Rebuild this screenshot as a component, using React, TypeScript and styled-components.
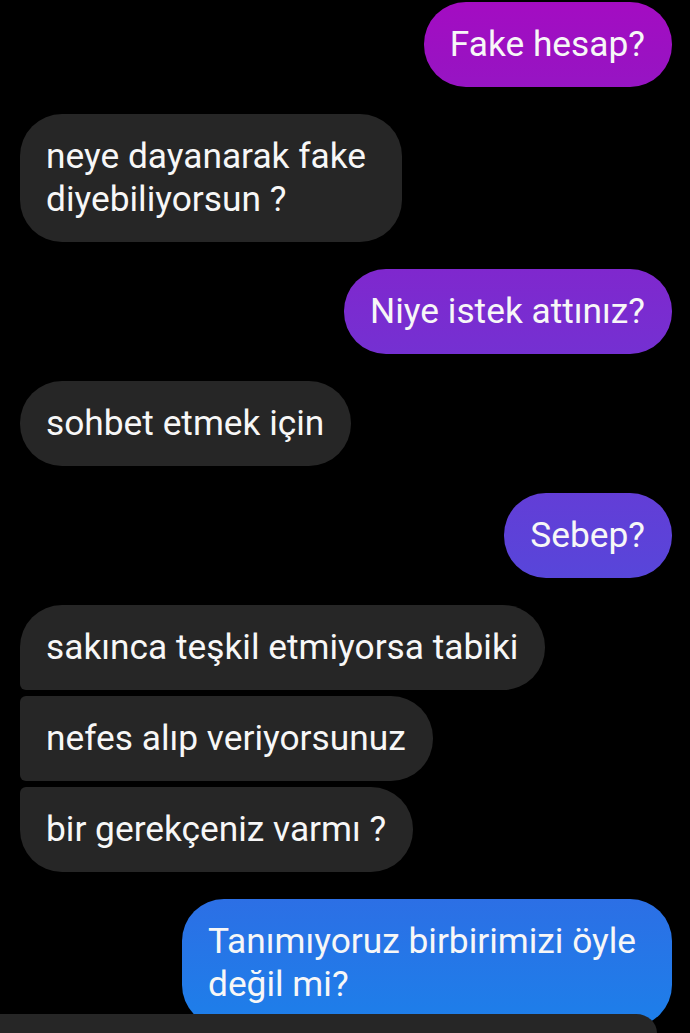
import React from "react";
import styled, { createGlobalStyle, css } from "styled-components";

const Global = createGlobalStyle`
  html, body {
    margin: 0;
    padding: 0;
    background: #000;
  }
  body {
    font-family: Roboto, "Noto Sans", "Liberation Sans", sans-serif;
    overflow: hidden;
  }
`;

const Thread = styled.div`
  display: flex;
  flex-direction: column;
  padding: 2px 18px 0 20px;
  height: 1033px;
  box-sizing: border-box;
  overflow: hidden;
`;

const Block = styled.div<{ $side: "in" | "out" }>`
  display: flex;
  flex-direction: column;
  align-items: ${(p) => (p.$side === "out" ? "flex-end" : "flex-start")};
  gap: 6px;
  margin-bottom: 27px;
`;

type Pos = "single" | "first" | "middle" | "last";

const radius = (pos: Pos) => {
  switch (pos) {
    case "first":
      return "42px 42px 42px 6px";
    case "middle":
      return "6px 42px 42px 6px";
    case "last":
      return "6px 42px 42px 42px";
    default:
      return "42px";
  }
};

const Bubble = styled.div<{ $side: "in" | "out"; $pos?: Pos; $wrapped?: boolean }>`
  box-sizing: border-box;
  width: ${(p) => (p.$wrapped ? (p.$side === "out" ? "490px" : "382px") : "fit-content")};
  padding: 21px 27px 21px 26px;
  font-size: 35.3px;
  line-height: 43px;
  color: #f7f7f7;
  letter-spacing: 0;
  border-radius: ${(p) => radius(p.$pos ?? "single")};
  ${(p) =>
    p.$side === "out"
      ? css`
          background: linear-gradient(
            180deg,
            #a40cc2 0px,
            #9a12c2 60px,
            #7a2cd0 310px,
            #5a44d9 560px,
            #3d5ee0 760px,
            #1c80ea 1033px
          );
          background-attachment: fixed;
        `
      : css`
          background: #262626;
        `}
`;

const Composer = styled.div`
  position: fixed;
  left: 0;
  bottom: 0;
  width: 657px;
  height: 19px;
  background: #262626;
  border-top-right-radius: 44px 40px;
`;

export default function App() {
  return (
    <>
      <Global />
      <Thread>
        <Block $side="out">
          <Bubble $side="out">Fake hesap?</Bubble>
        </Block>
        <Block $side="in">
          <Bubble $side="in" $wrapped>
            neye dayanarak fake
            <br />
            diyebiliyorsun ?
          </Bubble>
        </Block>
        <Block $side="out">
          <Bubble $side="out">Niye istek attınız?</Bubble>
        </Block>
        <Block $side="in">
          <Bubble $side="in">sohbet etmek için</Bubble>
        </Block>
        <Block $side="out">
          <Bubble $side="out">Sebep?</Bubble>
        </Block>
        <Block $side="in">
          <Bubble $side="in" $pos="first">
            sakınca teşkil etmiyorsa tabiki
          </Bubble>
          <Bubble $side="in" $pos="middle">
            nefes alıp veriyorsunuz
          </Bubble>
          <Bubble $side="in" $pos="last">
            bir gerekçeniz varmı ?
          </Bubble>
        </Block>
        <Block $side="out">
          <Bubble $side="out" $wrapped>
            Tanımıyoruz birbirimizi öyle
            <br />
            değil mi?
          </Bubble>
        </Block>
      </Thread>
      <Composer />
    </>
  );
}
